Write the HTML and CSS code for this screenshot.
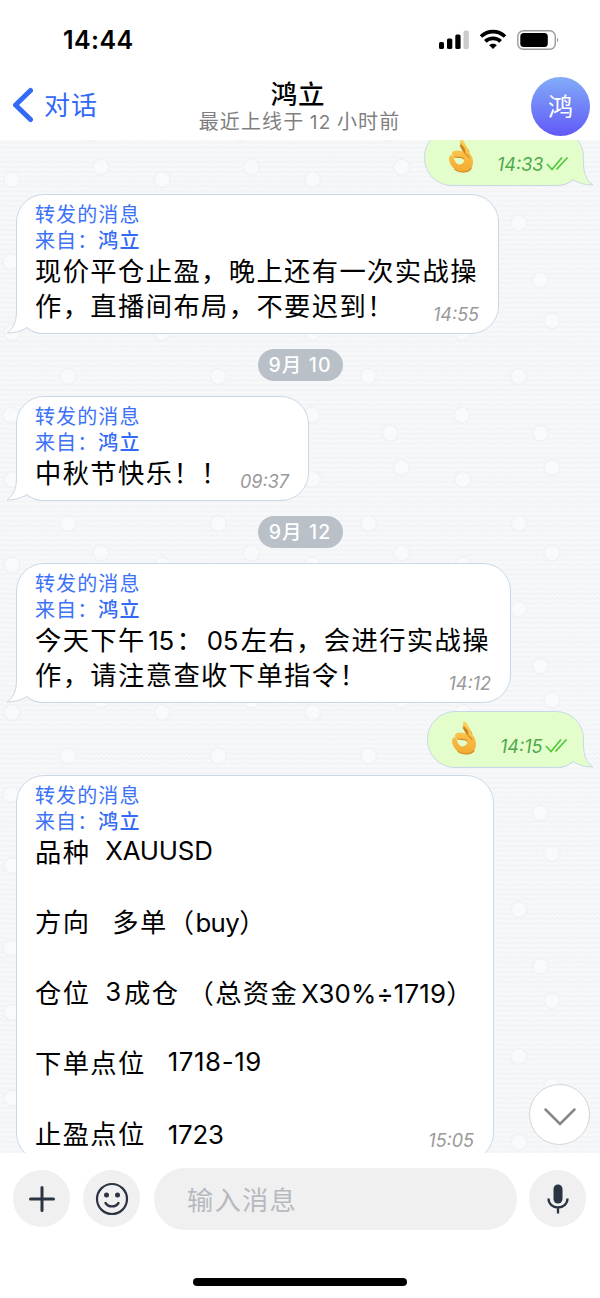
FILE: index.html
```html
<!DOCTYPE html>
<html lang="zh-CN">
<head>
<meta charset="utf-8">
<title>鸿立</title>
<link rel="stylesheet" href="styles.css">
</head>
<body>
<svg class="defs" width="0" height="0">
  <defs>
    <symbol id="tail" viewBox="0 0 38 26">
      <path d="M11 0V3C11 14 7 21 1 25C9 25 16 23 21 19.5C26 23.500 31 25 38 25V0Z" fill="currentColor"/>
      <path d="M10.500 0V3C10.500 14 7 21 1 25C9 25 16 23 21 19.500C26 24 31 25.500 38 25.500" fill="none" stroke="#c9d8e8"/>
    </symbol>
    <symbol id="ok-hand" viewBox="0 0 30 38">
      <linearGradient id="skin" x1="0" y1="0" x2="0" y2="1">
        <stop offset="0" stop-color="#ffd058"/><stop offset="1" stop-color="#f3aa32"/>
      </linearGradient>
      <path d="M13.500 5C12.500 6 13.500 9 15 12L18 18L23 14L18 7C16.500 5 15 4 13.500 5Z" fill="#c98520"/>
      <path d="M13 2C14.500 0 17 3 19 7L24 17C27 21 28 27 25 32C22 37 12 38 7 33C3 30 0 24 1.500 20C2.500 17 5 18 6 20C7 24 9 28 12 28C16 28 18 25 17 22C15 20 10 21 7 20C4 19 3 15 6 14C10 12.500 15 13 19 16L18 11C16 8 12 5 13 2Z" fill="url(#skin)"/>
      <path d="M18 16L13 8M19 17C21 18 22 19 22.500 21M7 20C10 21 15 19.500 17 22" fill="none" stroke="#cf8822" stroke-width="1.200" stroke-linecap="round"/>
      <path d="M7 33C12 37.500 22 37 25 32" fill="none" stroke="#d48d24" stroke-width="1.200"/>
    </symbol>
    <symbol id="ticks" viewBox="0 0 23 15">
      <path d="M1 8L6 13.500L16 1.500M10.500 13.500L21.500 1.500" fill="none" stroke="#4fc93a" stroke-width="1.700"/>
    </symbol>
    <pattern id="waves" width="5.010" height="4.850" patternUnits="userSpaceOnUse">
      <path d="M-.5 3.200L1.250 1.700L3.750 3.700L5.500 2.200" fill="none" stroke="#f0f2f4" stroke-width="1.200"/>
    </pattern>
    <pattern id="dots" width="150.300" height="533" patternUnits="userSpaceOnUse">
      <g fill="#f9fafb" stroke="#eff1f3" stroke-width="1.500">
        <circle cx="68" cy="83" r="8"/><circle cx="68" cy="236.500" r="8"/><circle cx="68" cy="383.500" r="8"/><circle cx="68" cy="469" r="8"/>
        <circle cx="89.500" cy="140" r="8"/><circle cx="89.500" cy="293.300" r="8"/><circle cx="89.500" cy="526" r="8"/><circle cx="89.500" cy="-7" r="8"/>
        <circle cx="101" cy="27" r="8"/><circle cx="101" cy="180.700" r="8"/><circle cx="101" cy="327.600" r="8"/><circle cx="101" cy="413" r="8"/>
        <circle cx="12" cy="39.600" r="8"/><circle cx="10.800" cy="121.700" r="8"/><circle cx="12" cy="192.600" r="8"/><circle cx="10.800" cy="275" r="8"/><circle cx="12" cy="339.600" r="8"/><circle cx="12" cy="425" r="8"/>
      </g>
    </pattern>
  </defs>
</svg>

<div class="screen">
  <header class="top">
    <div class="status">
      <span class="clock">14:44</span>
      <svg class="indicators" width="122" height="22" viewBox="0 0 122 22">
        <rect x="1" y="13" width="5" height="7" rx="1.600"/>
        <rect x="9" y="9.500" width="5.300" height="10.500" rx="1.600"/>
        <rect x="17.300" y="5.500" width="5.300" height="14.500" rx="1.600"/>
        <rect x="25.500" y="1.500" width="5.300" height="18.500" rx="1.600" fill="#cbcbcb"/>
        <g fill="none" stroke="#000" stroke-width="3.700">
          <path d="M43 7.500C50 .9 60 .9 67 7.500"/>
          <path d="M47.300 12.300C51.500 8.300 58.500 8.300 62.700 12.300"/>
        </g>
        <path d="M51.200 16.200C53.300 14.300 56.700 14.300 58.800 16.200L55 20Z"/>
        <rect x="79.800" y="1.800" width="37.500" height="18.500" rx="5.500" fill="none" stroke="#9b9b9b" stroke-width="1.400"/>
        <rect x="82.300" y="4" width="27.500" height="14" rx="3.500"/>
        <path d="M119 8.500Q121.500 11 119 13.500Z" fill="#9b9b9b"/>
      </svg>
    </div>
    <nav class="bar">
      <div class="back">
        <svg width="22" height="36" viewBox="0 0 22 36"><path d="M19.500 3.500L4.500 18L19.500 32.500" fill="none" stroke="#3269f6" stroke-width="5" stroke-linecap="round" stroke-linejoin="round"/></svg>
        <span>对话</span>
      </div>
      <div class="peer">
        <div class="name">鸿立</div>
        <div class="seen">最近上线于 <span class="num">12</span> 小时前</div>
      </div>
      <div class="avatar">鸿</div>
    </nav>
  </header>

  <main class="chat">
    <svg class="wallpaper" width="600" height="1013"><rect width="600" height="1013" fill="url(#waves)"/><rect width="650" height="1013" fill="url(#dots)"/></svg>

    <div class="bubble out first">
      <svg class="tail"><use href="#tail"/></svg>
      <svg class="emoji"><use href="#ok-hand"/></svg>
      <span class="time">14:33</span>
      <svg class="ticks"><use href="#ticks"/></svg>
    </div>

    <div class="bubble in w1">
      <svg class="tail"><use href="#tail"/></svg>
      <div class="fwd">转发的消息<br>来自：<b>鸿立</b></div>
      <div class="line">现价平仓止盈，晚上还有一次实战操</div>
      <div class="line"><span>作，直播间布局，不要迟到！</span><span class="time">14:55</span></div>
    </div>

    <div class="date">9月 10</div>

    <div class="bubble in w2">
      <svg class="tail"><use href="#tail"/></svg>
      <div class="fwd">转发的消息<br>来自：<b>鸿立</b></div>
      <div class="line"><span>中秋节快乐！！</span><span class="time">09:37</span></div>
    </div>

    <div class="date">9月 12</div>

    <div class="bubble in w3">
      <svg class="tail"><use href="#tail"/></svg>
      <div class="fwd">转发的消息<br>来自：<b>鸿立</b></div>
      <div class="line"><span>今天下午<i class="lat digits">15</i>：<i class="lat digits">05</i>左右，会进行实战操</span></div>
      <div class="line"><span>作，请注意查收下单指令！</span><span class="time">14:12</span></div>
    </div>

    <div class="bubble out second">
      <svg class="tail"><use href="#tail"/></svg>
      <svg class="emoji"><use href="#ok-hand"/></svg>
      <span class="time">14:15</span>
      <svg class="ticks"><use href="#ticks"/></svg>
    </div>

    <div class="bubble in w4">
      <div class="fwd">转发的消息<br>来自：<b>鸿立</b></div>
      <div class="line order"><span>品种</span><i class="lat gap2">XAUUSD</i></div>
      <div class="line order"><span>方向</span><span class="gap3">多单（<i class="lat buy">buy</i>）</span></div>
      <div class="line order"><span>仓位</span><i class="lat gap2">3</i><span class="gap0">成仓</span><span class="gap1">（总资金<i class="lat formula">X30%÷1719</i>）</span></div>
      <div class="line order"><span>下单点位</span><i class="lat range gap3">1718-19</i></div>
      <div class="line last"><span>止盈点位<i class="lat gap3">1723</i></span><span class="time">15:05</span></div>
    </div>

    <div class="jump"><svg width="34" height="20" viewBox="0 0 34 20"><path d="M2.500 2.500L17 17L31.500 2.500" fill="none" stroke="#85858a" stroke-width="2.500" stroke-linecap="round"/></svg></div>
  </main>

  <footer class="composer">
    <div class="tools">
      <div class="round"><svg width="28" height="28" viewBox="0 0 28 28"><path d="M14 2.500V25.500M2.500 14H25.500" stroke="#2b3442" stroke-width="3" stroke-linecap="round"/></svg></div>
      <div class="round"><svg width="34" height="34" viewBox="0 0 34 34"><circle cx="17" cy="17" r="15" fill="none" stroke="#2b3442" stroke-width="2.200"/><circle cx="11.500" cy="13" r="2.500" fill="#2b3442"/><circle cx="22.500" cy="13" r="2.500" fill="#2b3442"/><path d="M10.500 21C13.500 25.600 20.500 25.600 23.500 21" fill="none" stroke="#2b3442" stroke-width="2.300" stroke-linecap="round"/></svg></div>
      <div class="input">输入消息</div>
      <div class="round"><svg width="22" height="30" viewBox="0 0 22 30"><rect x="6.500" y=".5" width="9" height="19" rx="4.500" fill="#2b3442"/><path d="M1.500 14.500C1.500 20 6 23.500 11 23.500S20.500 20 20.500 14.500M11 24V29.500" fill="none" stroke="#2b3442" stroke-width="2.300"/></svg></div>
    </div>
    <div class="home"></div>
  </footer>
</div>
</body>
</html>
```

FILE: styles.css
```css
* { box-sizing: border-box; }
body {
  margin: 0;
  background: #fff;
  color: #000;
  font-family: Inter, "Noto Sans CJK SC", sans-serif;
}
svg { display: block; flex: none; }
.defs { position: absolute; }
.screen {
  width: 600px;
  height: 1298px;
  display: flex;
  flex-direction: column;
  overflow: hidden;
}

/* Header */
.top { height: 140px; flex: none; }
.status {
  height: 74px;
  display: flex;
  justify-content: space-between;
  align-items: flex-start;
  padding: 28px 40px 0 63px;
}
.clock { font-size: 25px; line-height: 24px; font-weight: 600; letter-spacing: .4px; }
.indicators { margin-top: 1px; }
.bar {
  display: grid;
  grid-template-columns: 150px 1fr 150px;
  height: 66px;
}
.back {
  display: flex;
  align-items: center;
  gap: 11px;
  height: 62px;
  padding-left: 11px;
  color: #3269f6;
  font: 26px/36px "Noto Sans CJK SC", sans-serif;
  letter-spacing: 1px;
}
.back span { margin-top: -2px; }
.peer { text-align: center; white-space: nowrap; }
.name { font: 500 26.500px/37px "Noto Sans CJK SC", sans-serif; letter-spacing: .8px; padding-right: 4px; }
.seen { font: 20px/20px "Noto Sans CJK SC", sans-serif; letter-spacing: 1.100px; color: #7f7f7f; padding-right: 1px; }
.num { font-family: Inter, sans-serif; font-size: 19px; }
.avatar {
  width: 59px;
  height: 59px;
  margin: 3px 10px 0 auto;
  border-radius: 50%;
  background: linear-gradient(#82acf8, #6159f7);
  color: #fff;
  text-align: center;
  font: 25px/56px "Noto Sans CJK SC", sans-serif;
}

/* Conversation */
.chat {
  position: relative;
  isolation: isolate;
  height: 1013px;
  flex: none;
  overflow: hidden;
  display: flex;
  flex-direction: column;
  background: #f7f8fa;
}
.wallpaper { position: absolute; top: 0; left: 0; z-index: -1; }
.bubble {
  position: relative;
  isolation: isolate;
  flex: none;
  border: 1px solid #c9d8e8;
  border-radius: 28px;
}
.tail { position: absolute; z-index: -1; width: 38px; height: 26px; bottom: -1px; }
.in {
  margin-left: 16px;
  padding: 6px 19px 8px 18px;
  background: #fff;
  color: #fff;
}
.in .tail { left: -11px; }
.w1 { width: 483px; height: 140px; margin-top: 8px; }
.w2 { width: 293px; height: 105px; margin-top: 15px; }
.w3 { width: 495px; height: 140px; margin-top: 15px; }
.w4 { width: 478px; height: 386px; margin-top: 7px; }
.out {
  align-self: flex-end;
  display: flex;
  align-items: flex-start;
  height: 57px;
  margin-right: 16px;
  padding-left: 23px;
  background: #e3fecb;
  color: #e3fecb;
}
.out .tail { right: -11px; transform: scaleX(-1); }
.first { width: 160px; margin-top: -11px; }
.second { width: 157px; margin-top: 8px; }
.emoji { width: 28px; height: 36px; margin-top: 8px; }
.out .time { margin: 23px 0 0 21px; color: #4da84b; }
.ticks { width: 23px; height: 15px; margin: 26px 0 0 3px; }
.fwd {
  font: 20px/25.500px "Noto Sans CJK SC", sans-serif;
  letter-spacing: 1.100px;
  color: #3b72f7;
}
.fwd b { font-weight: 500; color: #3269f6; }
.line {
  display: flex;
  justify-content: space-between;
  height: 35.200px;
  font: 26.300px/35px "Noto Sans CJK SC", sans-serif;
  letter-spacing: 1.380px;
  color: #000;
  white-space: nowrap;
}
.lat { font-family: Inter, sans-serif; font-style: normal; font-size: 25.800px; letter-spacing: -.2px; }
.digits { margin: 0 2.500px; }
.buy { letter-spacing: -.6px; }
.range { letter-spacing: .6px; }
.formula { margin-left: 3px; letter-spacing: .2px; }
.time {
  margin-top: 16px;
  font: italic 18px/24px Inter, sans-serif;
  letter-spacing: 0;
  color: #999;
}
.order { height: 70.400px; justify-content: flex-start; }
.last .time { margin-top: 14px; }
.gap0 { margin-left: 3px; }
.gap1 { margin-left: 8px; }
.gap2 { margin-left: 15px; }
.gap3 { margin-left: 22px; }
.date {
  align-self: center;
  flex: none;
  width: 85px;
  height: 32px;
  margin-top: 15px;
  border-radius: 16px;
  background: #b9c0c8;
  color: #fff;
  text-align: center;
  font: 500 19.500px/32px Inter, "Noto Sans CJK SC", sans-serif;
  letter-spacing: 1.100px;
}
.jump {
  position: absolute;
  right: 10px;
  bottom: 8px;
  width: 61px;
  height: 61px;
  border: 1px solid #d3d5d8;
  border-radius: 50%;
  background: #fff;
  display: flex;
  align-items: center;
  justify-content: center;
  padding-top: 4px;
}

/* Composer */
.composer { height: 145px; padding-top: 15px; }
.tools { display: flex; align-items: center; padding-left: 13px; gap: 13px; }
.round {
  width: 57px;
  height: 57px;
  flex: none;
  margin-bottom: 1px;
  border-radius: 50%;
  background: #f0f0f0;
  display: flex;
  align-items: center;
  justify-content: center;
}
.input {
  width: 363px;
  height: 62px;
  margin: 0 -1px 0 1px;
  padding-left: 33px;
  border-radius: 31px;
  background: #f0f0f0;
  color: #b6bac0;
  font: 26.300px/61px "Noto Sans CJK SC", sans-serif;
  letter-spacing: 1.200px;
}
.home { width: 214px; height: 8px; margin: 48px auto 0; border-radius: 4px; background: #000; }
```
